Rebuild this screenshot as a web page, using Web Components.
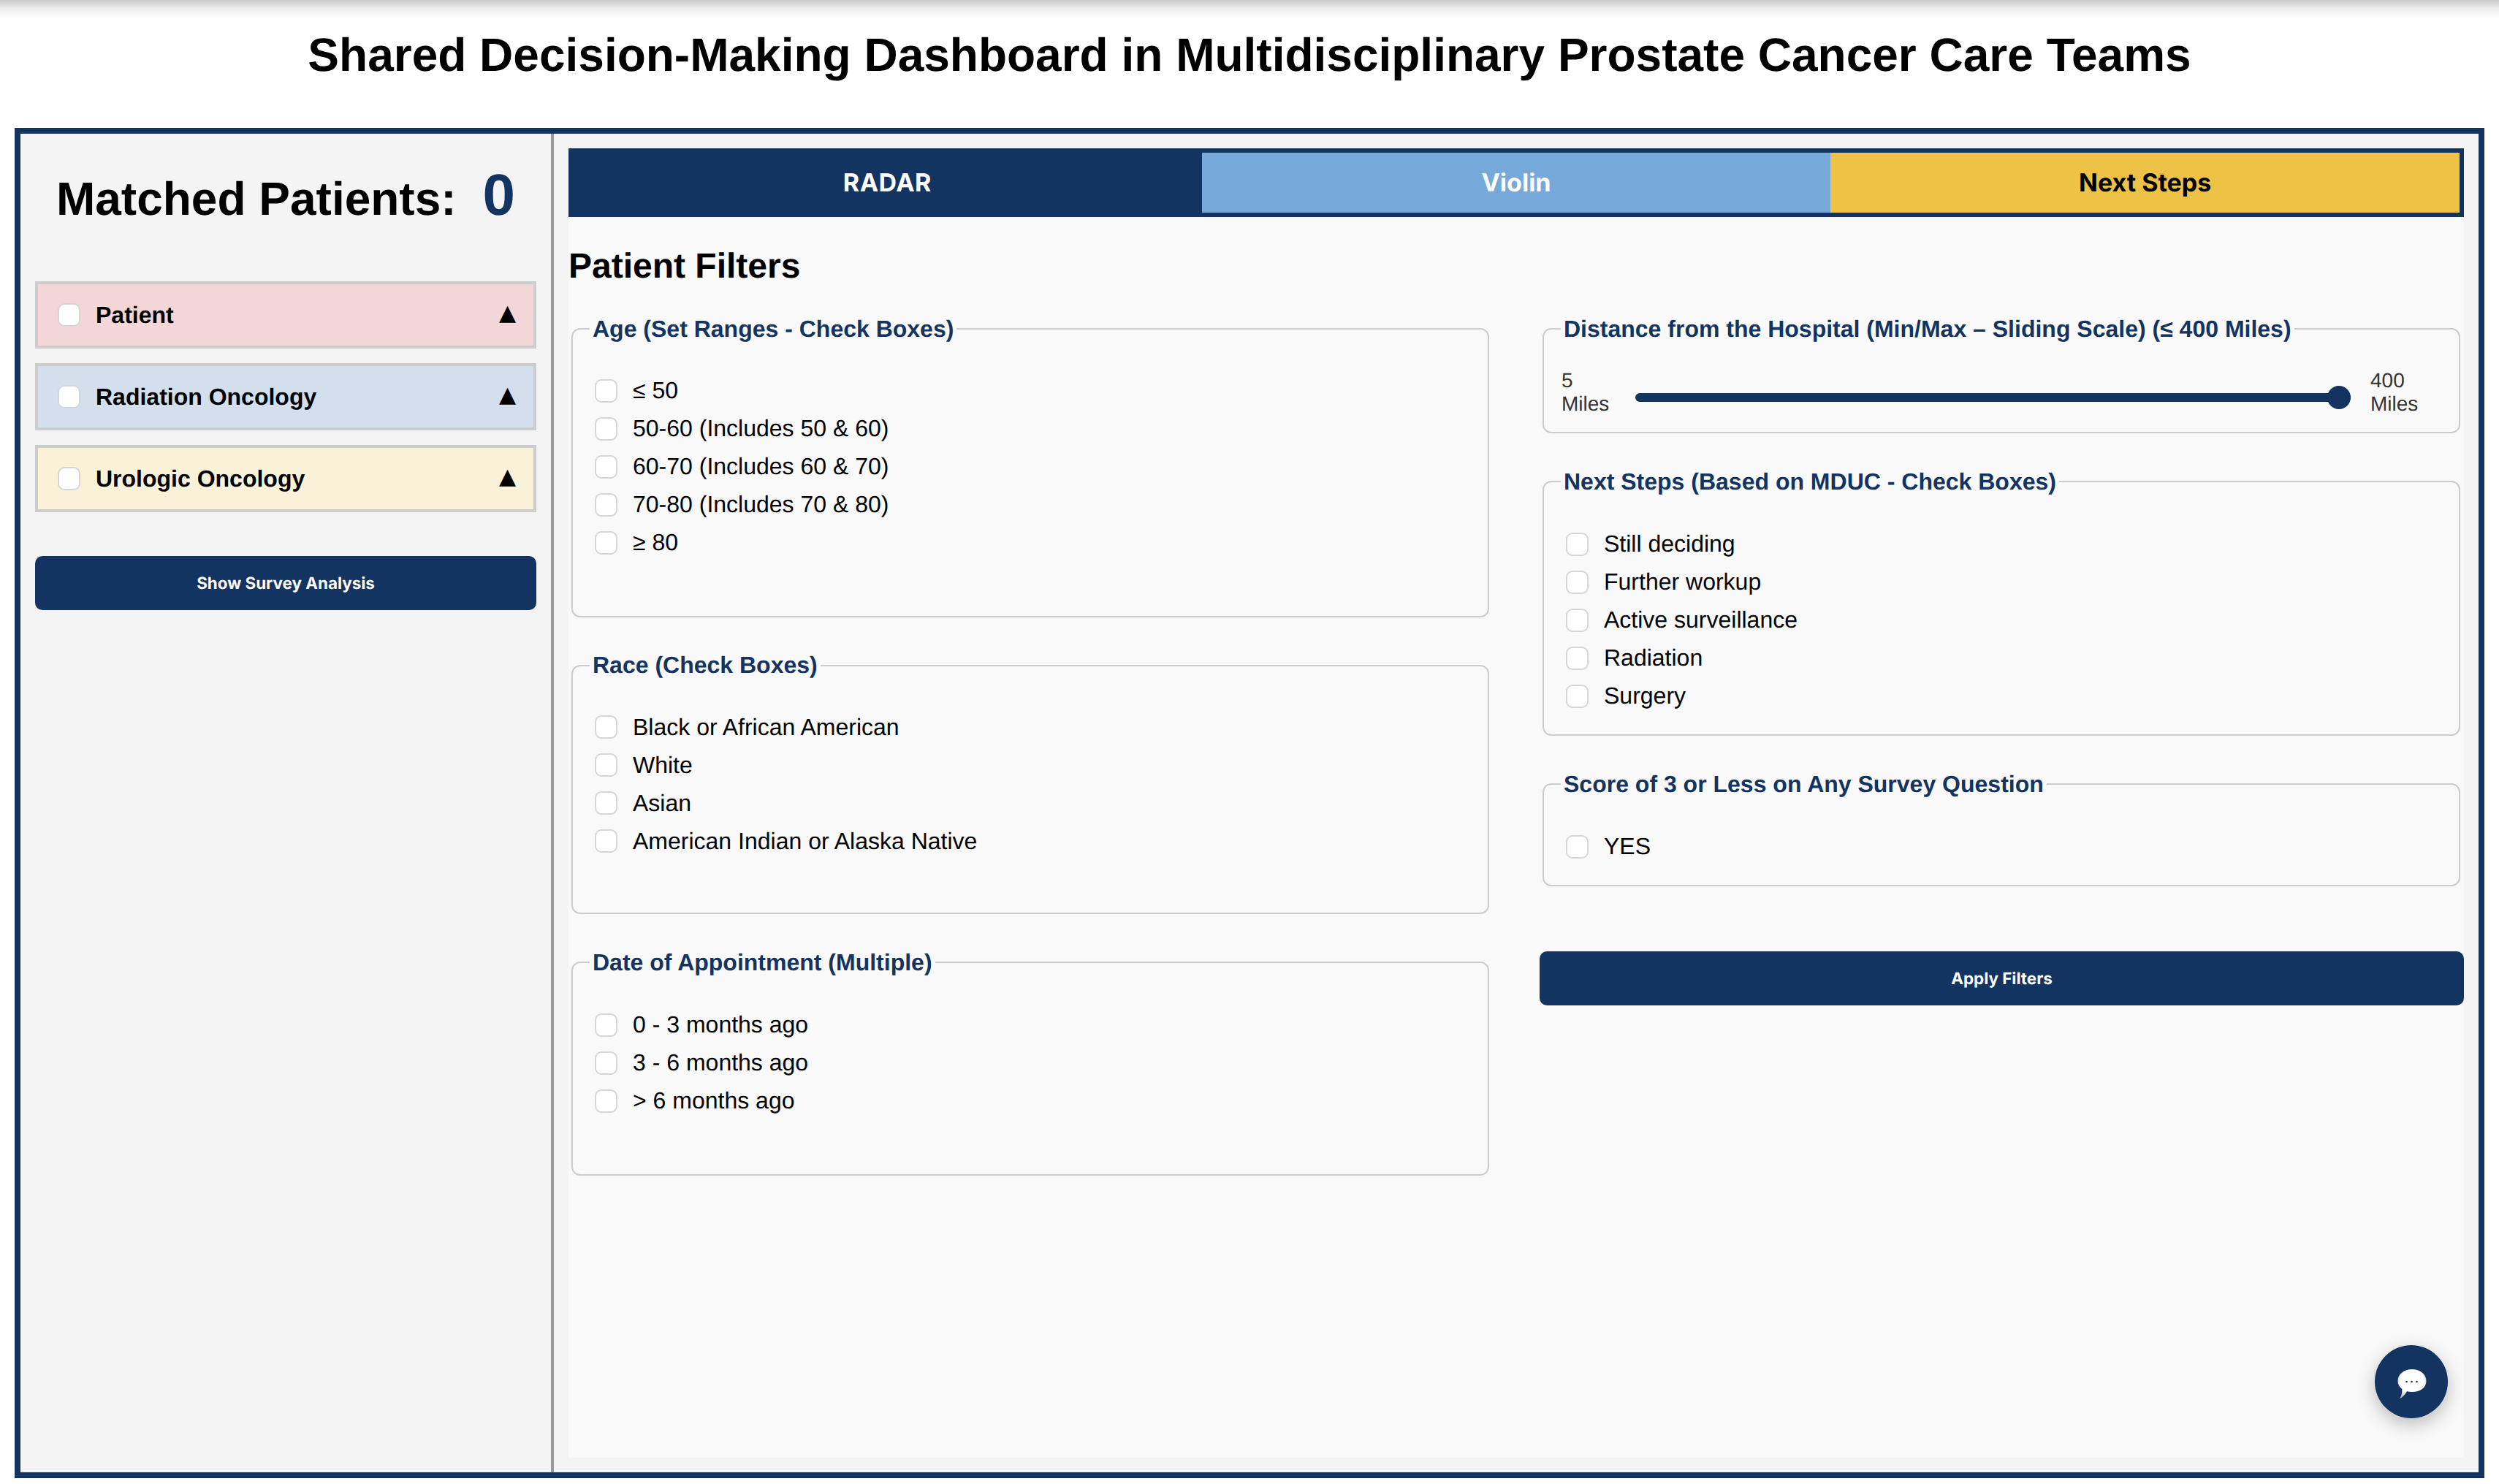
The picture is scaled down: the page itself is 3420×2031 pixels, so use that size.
<!DOCTYPE html>
<html lang="en"><head><meta charset="utf-8"><title>Dashboard</title>
<style>
html,body{margin:0;padding:0;background:#fff;height:100%;overflow:hidden}
body{font-family:"Liberation Sans",Arial,sans-serif;color:#000;text-rendering:geometricPrecision}
</style></head><body>
<dash-app>
  <page-title slot="title">Shared Decision-Making Dashboard in Multidisciplinary Prostate Cancer Care Teams</page-title>
  <side-panel slot="side">
    <matched-count value="0">Matched Patients:</matched-count>
    <accordion-item tone="#f3d6d8">Patient</accordion-item>
    <accordion-item tone="#d3dfed">Radiation Oncology</accordion-item>
    <accordion-item tone="#faf2d8">Urologic Oncology</accordion-item>
    <action-button style="margin-top:60px">Show Survey Analysis</action-button>
  </side-panel>
  <main-panel slot="main">
    <tab-bar></tab-bar>
    <section-heading>Patient Filters</section-heading>
    <filter-grid>
      <div slot="left">
        <filter-group legend="Age (Set Ranges - Check Boxes)" tail="84">
          <check-option>≤ 50</check-option>
          <check-option>50-60 (Includes 50 &amp; 60)</check-option>
          <check-option>60-70 (Includes 60 &amp; 70)</check-option>
          <check-option>70-80 (Includes 70 &amp; 80)</check-option>
          <check-option>≥ 80</check-option>
        </filter-group>
        <filter-group legend="Race (Check Boxes)" tail="82">
          <check-option>Black or African American</check-option>
          <check-option>White</check-option>
          <check-option>Asian</check-option>
          <check-option>American Indian or Alaska Native</check-option>
        </filter-group>
        <filter-group legend="Date of Appointment (Multiple)" tail="84" lead="51">
          <check-option>0 - 3 months ago</check-option>
          <check-option>3 - 6 months ago</check-option>
          <check-option>&gt; 6 months ago</check-option>
        </filter-group>
      </div>
      <div slot="right">
        <filter-group legend="Distance from the Hospital (Min/Max – Sliding Scale) (≤ 400 Miles)" tail="22.5" lead="36">
          <distance-slider></distance-slider>
        </filter-group>
        <filter-group legend="Next Steps (Based on MDUC - Check Boxes)" tail="36.500" lead="51">
          <check-option>Still deciding</check-option>
          <check-option>Further workup</check-option>
          <check-option>Active surveillance</check-option>
          <check-option>Radiation</check-option>
          <check-option>Surgery</check-option>
        </filter-group>
        <filter-group legend="Score of 3 or Less on Any Survey Question" tail="36.500" lead="51">
          <check-option>YES</check-option>
        </filter-group>
        <action-button style="margin-top:89px">Apply Filters</action-button>
      </div>
    </filter-grid>
  </main-panel>
  <chat-fab slot="fab"></chat-fab>
</dash-app>
<script>
const NAVY='#133360';
function def(name,css,html,extra){
  customElements.define(name,class extends HTMLElement{
    constructor(){super();const s=this.attachShadow({mode:'open'});s.innerHTML='<style>'+css+'</style>'+(typeof html==='function'?html(this):html);if(extra)extra(this,s);}
  });
}
const BOX='appearance:none;-webkit-appearance:none;width:31px;height:32px;box-sizing:border-box;border:2px solid #d6d6d6;border-radius:9px;background:#fff;flex:none;';
def('dash-app',`:host{display:flex;flex-direction:column;height:100vh;box-sizing:border-box;padding-bottom:8px}
  .top{height:175px;flex:none;background:linear-gradient(#cbcbcb 0,#ededed 12px,#fff 25px,#fff 100%)}
  .shell{flex:1;min-height:0;margin:0 20px;border:8px solid ${NAVY};display:flex;background:#f4f4f4}`,
  `<div class="top"><slot name="title"></slot></div><div class="shell"><slot name="side"></slot><slot name="main"></slot></div><slot name="fab"></slot>`);
def('page-title',`:host{display:block;text-align:center;font:700 64px/1 "Liberation Sans",Arial,sans-serif;padding-top:43px;color:#000}`,`<slot></slot>`);
def('side-panel',`:host{display:block;box-sizing:border-box;width:730px;flex:none;border-right:4px solid #999;padding:0 20px;background:#f4f4f4}
  ::slotted(accordion-item){margin-bottom:20px}`,`<slot></slot>`);
def('matched-count',`:host{display:flex;justify-content:center;align-items:baseline;gap:36px;height:202px;box-sizing:border-box;padding-top:44px;font:700 64px/1.3 "Liberation Sans",Arial,sans-serif}
  b{font-size:80px;color:${NAVY};line-height:1}`,el=>`<span><slot></slot></span><b>${el.getAttribute('value')}</b>`);
def('accordion-item',`:host{display:flex;align-items:center;box-sizing:border-box;height:92px;border:4px solid #ccc;padding:0 24px 0 27px;font:700 32px "Liberation Sans",Arial,sans-serif;background:var(--tone)}
  input{${BOX}margin:0 21px 0 0}
  .t{flex:1}.a{font:400 30px "DejaVu Sans",sans-serif;line-height:1;position:relative;top:-2px}`,
  `<input type="checkbox"><span class="t"><slot></slot></span><span class="a">▲</span>`,
  (el)=>{el.style.setProperty('--tone',el.getAttribute('tone'))});
def('action-button',`:host{display:flex;align-items:center;justify-content:center;height:74px;background:${NAVY};color:#fff;border-radius:10px;font:700 22.4px Inter,Roboto,sans-serif}`,`<slot></slot>`);
def('main-panel',`:host{display:block;flex:1;min-width:0;margin:20px;background:#f9f9f9}`,`<slot></slot>`);
def('tab-bar',`:host{display:flex;height:94px;box-sizing:border-box;border:6px solid ${NAVY};font:700 34px Inter,Roboto,sans-serif}
  div{flex:1;display:flex;align-items:center;justify-content:center}
  .a{background:${NAVY};color:#fff;letter-spacing:.5px}.b{background:#76a9da;color:#fff}.c{background:#eec345;color:#000}`,
  `<div class="a">RADAR</div><div class="b">Violin</div><div class="c">Next Steps</div>`);
def('section-heading',`:host{display:block;font:700 48px/56px "Liberation Sans",Arial,sans-serif;padding:40px 0 38.5px}`,`<slot></slot>`);
def('filter-grid',`:host{display:grid;grid-template-columns:1fr 1fr;column-gap:64px}`,`<slot name="left"></slot><slot name="right"></slot>`);
def('filter-group',`:host{display:block;margin:0 5px 47.5px 4px}
  fieldset{margin:0;border:2px solid #ccc;border-radius:12px;padding:var(--lead,50px) 0 var(--tail,40px) 30px;min-width:0}
  legend{margin-left:-7px;padding:0 4px;font:700 32px/37px "Liberation Sans",Arial,sans-serif;color:${NAVY}}
  .rows{display:flex;flex-direction:column;gap:20px}`,
  el=>`<fieldset><legend>${el.getAttribute('legend').replace(/&/g,'&amp;')}</legend><div class="rows"><slot></slot></div></fieldset>`,
  (el)=>{el.style.setProperty('--tail',el.getAttribute('tail')+'px');if(el.getAttribute('lead'))el.style.setProperty('--lead',el.getAttribute('lead')+'px')});
def('check-option',`:host{display:flex;align-items:center;height:32px;font:400 32px "Liberation Sans",Arial,sans-serif;color:#000}
  input{${BOX}margin:0 21px 0 0}`,
  `<input type="checkbox"><slot></slot>`);
def('distance-slider',`:host{display:flex;align-items:center;font:400 28px/32px "Liberation Sans",Arial,sans-serif;color:#333;margin-left:-6px}
  .l{width:101px;flex:none}.r{margin-left:27px}
  .track{position:relative;width:979px;height:12px;border-radius:6px;background:${NAVY};flex:none;top:7px}
  .thumb{position:absolute;right:0;top:-10px;width:32px;height:32px;border-radius:50%;background:${NAVY}}`,
  `<div class="l">5<br>Miles</div><div class="track"><div class="thumb"></div></div><div class="r">400<br>Miles</div>`);
def('chat-fab',`:host{position:fixed;right:70px;bottom:90px;width:100px;height:100px;border-radius:50%;background:${NAVY};box-shadow:0 8px 24px rgba(0,0,0,.25);display:flex;align-items:center;justify-content:center}
  svg{width:40px;height:40px;display:block;position:relative;left:1px;top:3px}`,
  `<svg viewBox="0 0 40 40" aria-hidden="true"><defs><radialGradient id="g" cx="50%" cy="42%" r="62%"><stop offset="0" stop-color="#fff"/><stop offset=".65" stop-color="#fff"/><stop offset="1" stop-color="#b5b5b5"/></radialGradient><filter id="f" x="-10%" y="-10%" width="120%" height="120%"><feGaussianBlur stdDeviation=".45"/></filter></defs>
  <path filter="url(#f)" fill="url(#g)" d="M20 0C31 0 39.500 6.500 39.500 16C39.500 25.500 31 31 20 31C17.500 31 15 30.700 13 30C10.500 35 6.500 39 3 40C5.500 36.500 6.500 32 6.300 27C2.500 24 .5 20.500 .5 16C.5 6.500 9 0 20 0Z"/>
  <circle cx="12.500" cy="17" r="1.300" fill="#333"/><circle cx="19.500" cy="17" r="1.300" fill="#333"/><circle cx="26.500" cy="17" r="1.300" fill="#333"/></svg>`);
</script>
</body></html>
